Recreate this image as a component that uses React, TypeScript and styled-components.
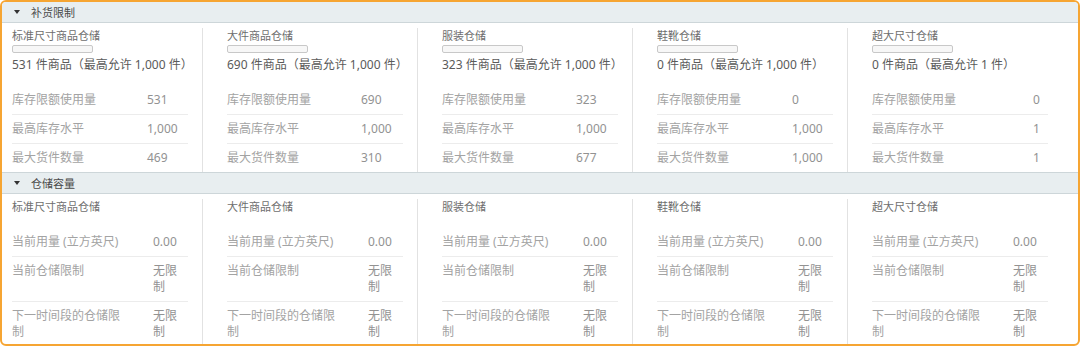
import React from 'react'
import styled, { createGlobalStyle } from 'styled-components'

const GlobalStyle = createGlobalStyle`
  body {
    margin: 0;
    background: #ffffff;
    font-family: 'Noto Sans', 'Noto Sans CJK SC', sans-serif;
  }
`

const Frame = styled.div`
  box-sizing: border-box;
  width: 1080px;
  height: 346px;
  border: 2px solid #f6a532;
  border-radius: 6px;
  overflow: hidden;
  background: #ffffff;
`

const SectionHeader = styled.div<{ $top?: boolean }>`
  box-sizing: border-box;
  height: ${(p) => (p.$top ? 22 : 21)}px;
  display: flex;
  align-items: center;
  gap: 11px;
  padding-left: 12px;
  background: #e8eef0;
  border-top: ${(p) => (p.$top ? '1px solid #cdd6d9' : 'none')};
  border-bottom: 1px solid #cdd6d9;
  font-size: 11px;
  color: #4a4a4a;
`

const Caret = styled.span`
  width: 0;
  height: 0;
  border-left: 3px solid transparent;
  border-right: 3px solid transparent;
  border-top: 4px solid #333333;
`

const SectionBody = styled.div`
  display: grid;
  grid-template-columns: repeat(5, 215px);
  padding-top: 5px;
`

const Column = styled.div<{ $last?: boolean }>`
  padding: 0 14px 0 10px;
  margin-right: 14px;
  border-right: 1px solid ${(p) => (p.$last ? 'transparent' : '#e2e2e2')};
  display: flex;
  flex-direction: column;
`

const ColumnTitle = styled.div`
  font-size: 11px;
  line-height: 15px;
  color: #6e6e6e;
`

const Bar = styled.div`
  box-sizing: border-box;
  width: 81px;
  height: 8px;
  margin-top: 2px;
  border: 1px solid #c8c8c8;
  border-radius: 2px;
  background: #f7f7f7;
`

const Count = styled.div`
  margin-top: 5px;
  font-size: 12px;
  line-height: 14px;
  color: #5a5a5a;
`

const Table = styled.div`
  margin-top: 14px;
  display: flex;
  flex-direction: column;
`

const Row = styled.div<{ $labelWidth: number }>`
  display: grid;
  grid-template-columns: ${(p) => p.$labelWidth}px 1fr;
  padding: 6px 0;
  border-bottom: 1px solid #ececec;
  font-size: 12px;
  line-height: 16px;

  &:last-child {
    border-bottom: none;
  }
`

const Label = styled.div`
  padding-right: 24px;
  color: #a3a3a3;
`

const Value = styled.div`
  color: #929292;
`

const replenish = [
  { name: '标准尺寸商品仓储', count: '531 件商品（最高允许 1,000 件）', labelWidth: 135, values: ['531', '1,000', '469'] },
  { name: '大件商品仓储', count: '690 件商品（最高允许 1,000 件）', labelWidth: 134, values: ['690', '1,000', '310'] },
  { name: '服装仓储', count: '323 件商品（最高允许 1,000 件）', labelWidth: 134, values: ['323', '1,000', '677'] },
  { name: '鞋靴仓储', count: '0 件商品（最高允许 1,000 件）', labelWidth: 135, values: ['0', '1,000', '1,000'] },
  { name: '超大尺寸仓储', count: '0 件商品（最高允许 1 件）', labelWidth: 161, values: ['0', '1', '1'] },
]

const replenishLabels = ['库存限额使用量', '最高库存水平', '最大货件数量']

const capacityNames = ['标准尺寸商品仓储', '大件商品仓储', '服装仓储', '鞋靴仓储', '超大尺寸仓储']
const capacityLabels = ['当前用量 (立方英尺)', '当前仓储限制', '下一时间段的仓储限制']
const capacityValues = ['0.00', '无限制', '无限制']

export default function App() {
  return (
    <Frame>
      <GlobalStyle />
      <SectionHeader>
        <Caret />
        补货限制
      </SectionHeader>
      <SectionBody>
        {replenish.map((col, i) => (
          <Column key={col.name} $last={i === replenish.length - 1}>
            <ColumnTitle>{col.name}</ColumnTitle>
            <Bar />
            <Count>{col.count}</Count>
            <Table>
              {replenishLabels.map((label, j) => (
                <Row key={label} $labelWidth={col.labelWidth}>
                  <Label>{label}</Label>
                  <Value>{col.values[j]}</Value>
                </Row>
              ))}
            </Table>
          </Column>
        ))}
      </SectionBody>
      <SectionHeader $top>
        <Caret />
        仓储容量
      </SectionHeader>
      <SectionBody>
        {capacityNames.map((name, i) => (
          <Column key={name} $last={i === capacityNames.length - 1}>
            <ColumnTitle>{name}</ColumnTitle>
            <Table>
              {capacityLabels.map((label, j) => (
                <Row key={label} $labelWidth={141}>
                  <Label>{label}</Label>
                  <Value>{capacityValues[j]}</Value>
                </Row>
              ))}
            </Table>
          </Column>
        ))}
      </SectionBody>
    </Frame>
  )
}
